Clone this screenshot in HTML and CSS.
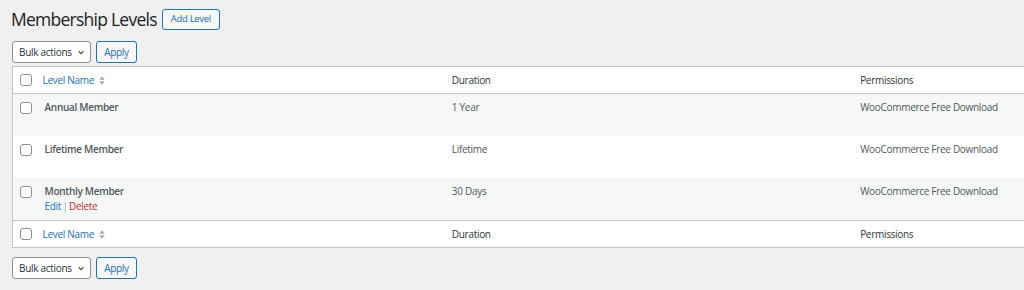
FILE: index.html
```html
<!DOCTYPE html>
<html lang="en">
<head>
<meta charset="utf-8">
<title>Membership Levels</title>
<link rel="stylesheet" href="styles.css">
</head>
<body>
<div class="wrap">
  <div class="page-head">
    <h1 class="page-title">Membership Levels</h1>
    <a class="btn-outline" href="#">Add Level</a>
  </div>

  <div class="tablenav top">
    <div class="select">Bulk actions
      <svg class="chev" width="8" height="5" viewBox="0 0 8 5"><path d="M0.8 0.8 L4 4 L7.2 0.8" fill="none" stroke="#3c434a" stroke-width="1.4"/></svg>
    </div>
    <a class="btn-outline" href="#">Apply</a>
  </div>

  <table class="list-table">
    <colgroup>
      <col class="c-check"><col class="c-name"><col class="c-dur"><col class="c-perm">
    </colgroup>
    <thead>
      <tr>
        <td class="check"><span class="cb"></span></td>
        <th class="sortable"><a href="#">Level Name</a><svg class="sort" width="6" height="9" viewBox="0 0 6 9"><path d="M0.3 3.8 L3 0.3 L5.7 3.8 Z M0.3 5.2 L3 8.7 L5.7 5.2 Z" fill="#a7aaad"/></svg></th>
        <th>Duration</th>
        <th>Permissions</th>
      </tr>
    </thead>
    <tbody>
      <tr class="alt">
        <td class="check"><span class="cb"></span></td>
        <td class="name"><strong>Annual Member</strong>
          <div class="row-actions hidden"><a href="#">Edit</a> <span class="sep">|</span> <a class="del" href="#">Delete</a></div>
        </td>
        <td>1 Year</td>
        <td>WooCommerce Free Download</td>
      </tr>
      <tr>
        <td class="check"><span class="cb"></span></td>
        <td class="name"><strong>Lifetime Member</strong>
          <div class="row-actions hidden"><a href="#">Edit</a> <span class="sep">|</span> <a class="del" href="#">Delete</a></div>
        </td>
        <td>Lifetime</td>
        <td>WooCommerce Free Download</td>
      </tr>
      <tr class="alt">
        <td class="check"><span class="cb"></span></td>
        <td class="name"><strong>Monthly Member</strong>
          <div class="row-actions"><a href="#">Edit</a> <span class="sep">|</span> <a class="del" href="#">Delete</a></div>
        </td>
        <td>30 Days</td>
        <td>WooCommerce Free Download</td>
      </tr>
    </tbody>
    <tfoot>
      <tr>
        <td class="check"><span class="cb"></span></td>
        <th class="sortable"><a href="#">Level Name</a><svg class="sort" width="6" height="9" viewBox="0 0 6 9"><path d="M0.3 3.8 L3 0.3 L5.7 3.8 Z M0.3 5.2 L3 8.7 L5.7 5.2 Z" fill="#a7aaad"/></svg></th>
        <th>Duration</th>
        <th>Permissions</th>
      </tr>
    </tfoot>
  </table>

  <div class="tablenav bottom">
    <div class="select">Bulk actions
      <svg class="chev" width="8" height="5" viewBox="0 0 8 5"><path d="M0.8 0.8 L4 4 L7.2 0.8" fill="none" stroke="#3c434a" stroke-width="1.4"/></svg>
    </div>
    <a class="btn-outline" href="#">Apply</a>
  </div>
</div>
</body>
</html>
```

FILE: styles.css
```css
html, body {
  margin: 0;
  padding: 0;
  overflow: hidden;
}
body {
  background: #f0f0f1;
  color: #3c434a;
  font-family: "Open Sans", "Noto Sans", sans-serif;
  font-size: 10px;
  letter-spacing: -0.3px;
  line-height: 14px;
}
a { text-decoration: none; color: #2271b1; }

.wrap {
  padding: 0 0 0 12px;
}

.page-head {
  display: flex;
  align-items: center;
  gap: 5px;
  height: 38px;
  margin-left: -1px;
}
.page-title {
  margin: 0;
  font-size: 17.5px;
  font-weight: 400;
  letter-spacing: -0.75px;
  color: #1d2327;
  line-height: 24px;
}

.btn-outline {
  display: inline-flex;
  align-items: center;
  justify-content: center;
  box-sizing: border-box;
  height: 21px;
  padding: 0 8px;
  border: 1px solid #2271b1;
  border-radius: 3px;
  background: #f6f7f7;
  color: #2271b1;
  font-size: 9.5px;
  letter-spacing: -0.3px;
  white-space: nowrap;
}
.page-head .btn-outline { padding: 0 8px; }

.tablenav {
  display: flex;
  gap: 5px;
  height: 22px;
}
.tablenav.top { margin-top: 3px; margin-bottom: 3px; }
.tablenav.bottom { margin-top: 9px; }
.tablenav .btn-outline { height: 22px; width: 41px; padding: 0; font-size: 10px; }

.select {
  display: flex;
  align-items: center;
  gap: 6px;
  box-sizing: border-box;
  height: 22px;
  width: 79px;
  padding: 0 6px;
  background: #fff;
  border: 1px solid #8c8f94;
  border-radius: 3px;
  color: #2c3338;
  font-size: 10px;
  white-space: nowrap;
}
.chev { margin-top: 1px; }

.list-table {
  border-collapse: collapse;
  table-layout: fixed;
  width: 1249px;
  background: #fff;
  border: 1px solid #c3c4c7;
}
.c-check { width: 22px; }
.c-name { width: 409px; }
.c-dur { width: 408px; }
.c-perm { width: 408px; }

.list-table thead tr { border-bottom: 1px solid #c3c4c7; }
.list-table tfoot tr { border-top: 1px solid #c3c4c7; }

.list-table th,
.list-table thead td,
.list-table tfoot td {
  height: 26px;
  padding: 0 8px;
  text-align: left;
  font-weight: 400;
  color: #2c3338;
  vertical-align: middle;
}
.list-table th.sortable a { color: #2271b1; }
.sort { vertical-align: -1px; margin-left: 5px; }

.list-table tbody td {
  padding: 6px 8px 7px;
  vertical-align: top;
  color: #50575e;
}
.list-table tbody tr.alt { background: #f6f7f7; }
.list-table tbody td.name { padding-left: 10px; }
.list-table tbody td.name strong { color: #50575e; font-weight: 600; }

.list-table td.check {
  padding: 0 0 0 7px;
}
.list-table tbody td.check { padding: 8px 0 0 7px; }

.cb {
  display: block;
  box-sizing: border-box;
  width: 12px;
  height: 12px;
  border: 1px solid #8c8f94;
  border-radius: 3px;
  background: #fff;
}

.row-actions { margin-top: 1px; color: #a7aaad; word-spacing: -1px; }
.row-actions.hidden { visibility: hidden; }
.row-actions .del { color: #b32d2e; }
.row-actions .sep { color: #a7aaad; }
```
